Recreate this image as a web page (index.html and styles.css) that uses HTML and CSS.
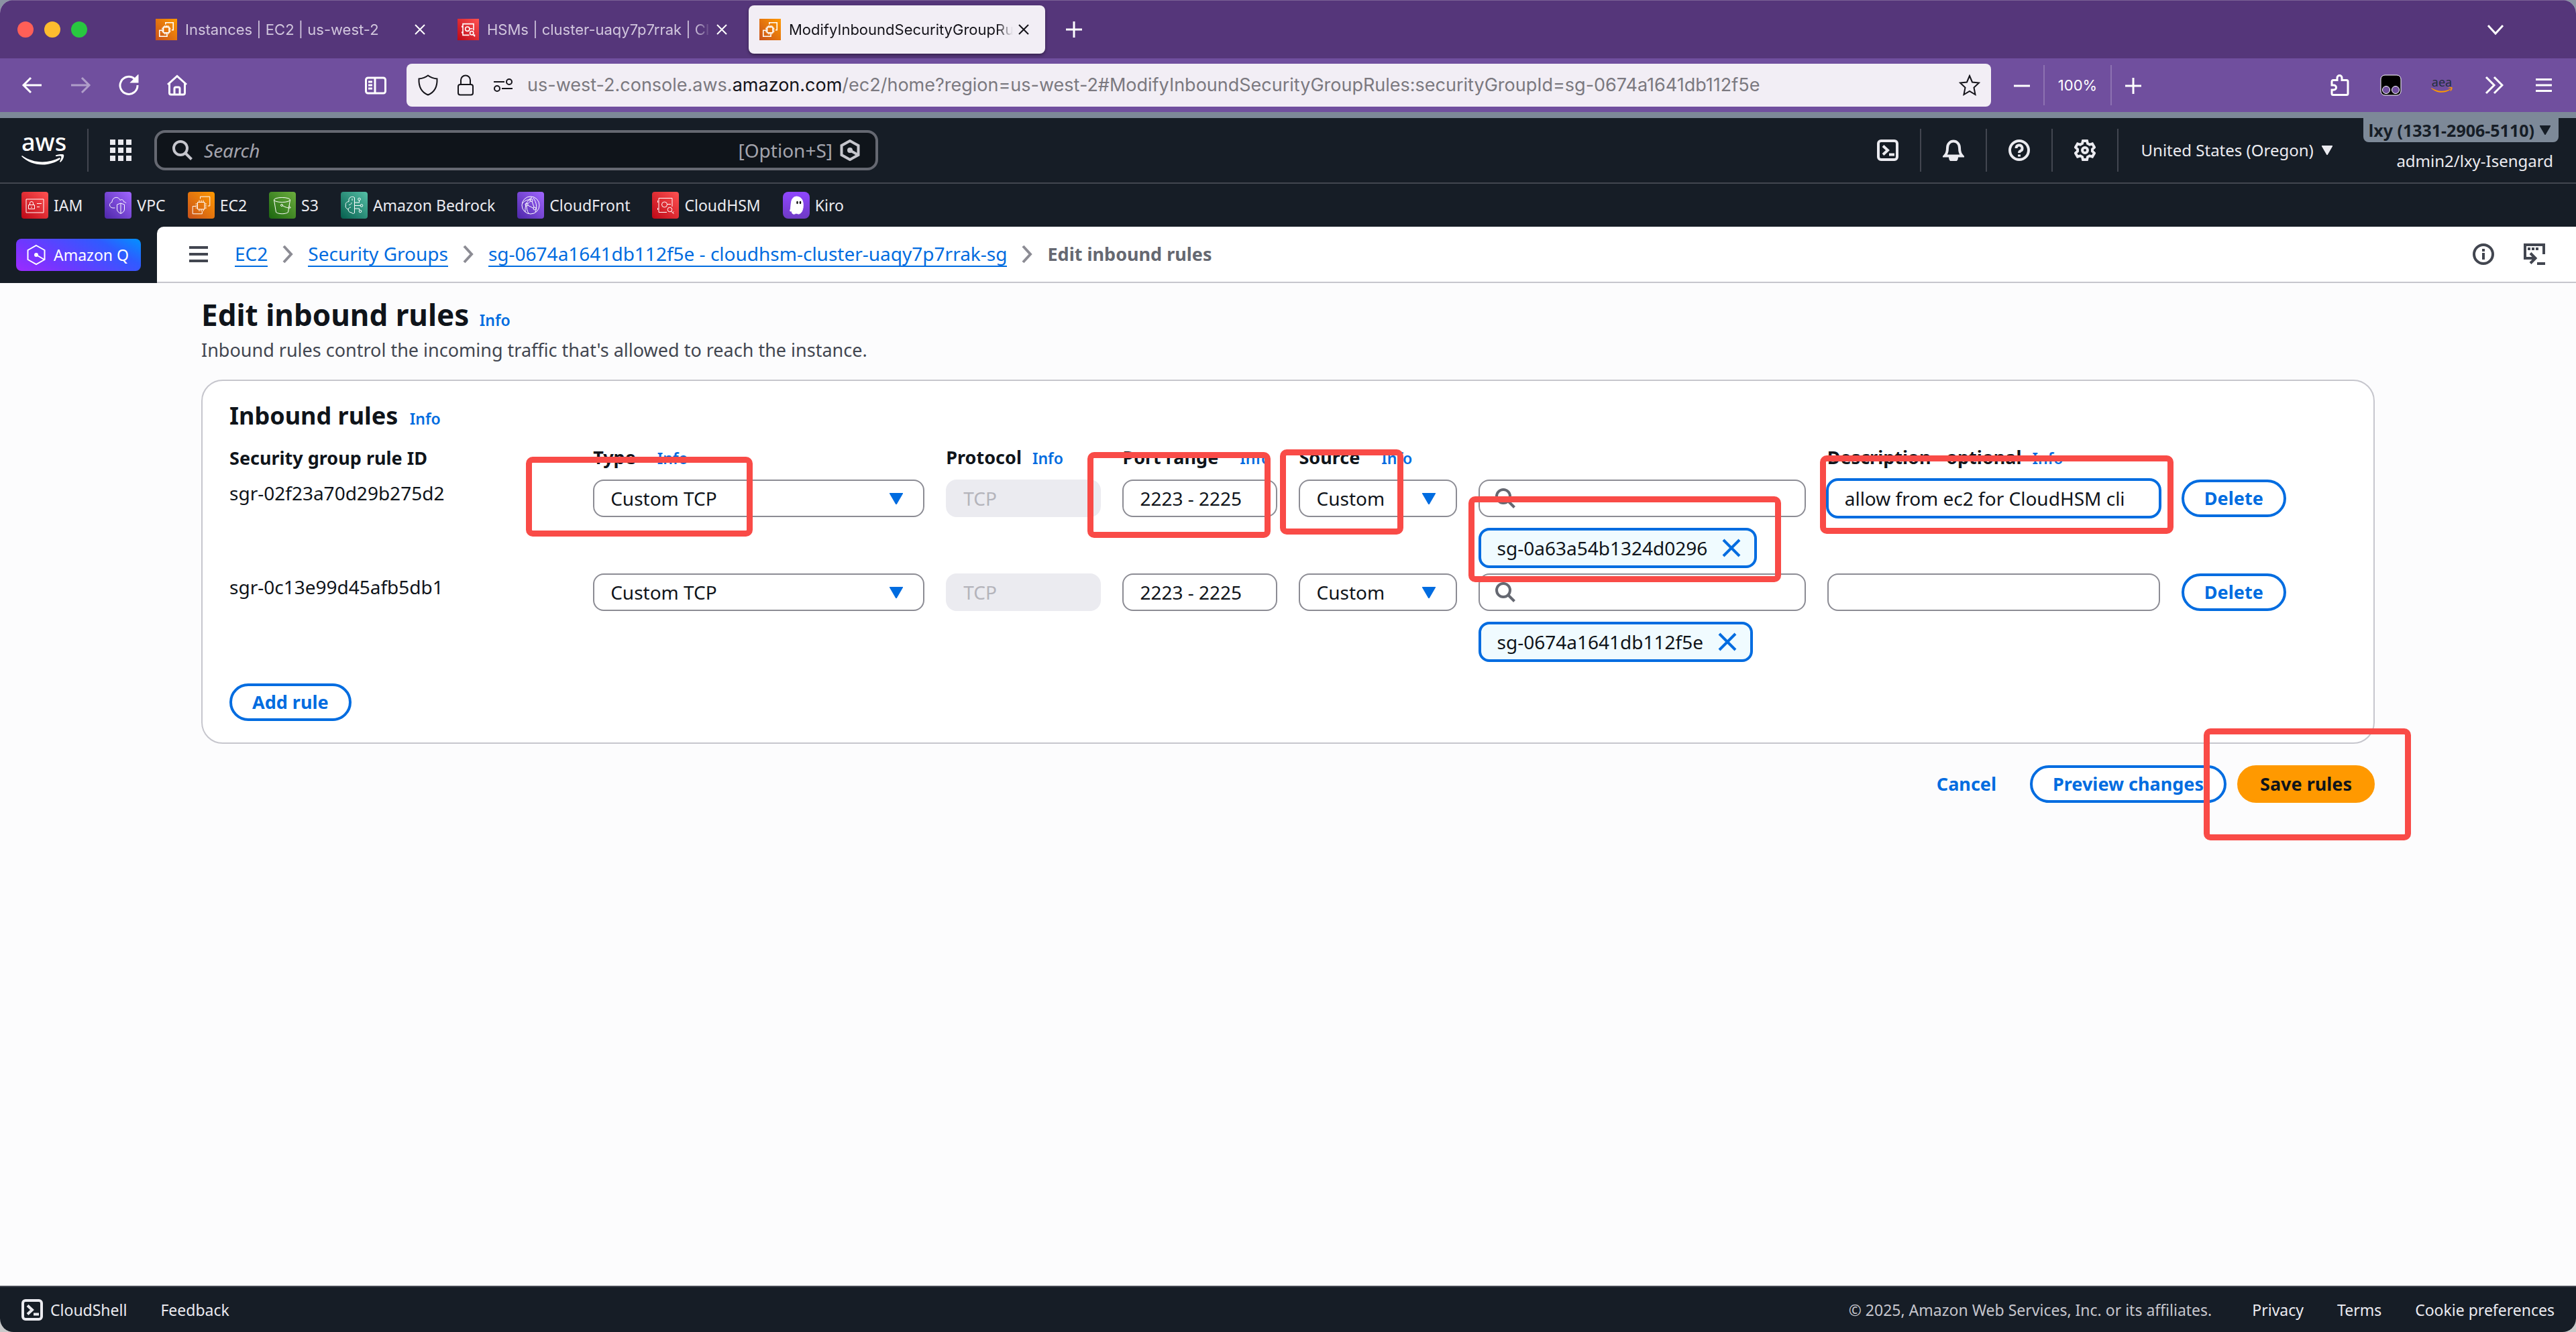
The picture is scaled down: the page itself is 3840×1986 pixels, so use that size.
FILE: index.html
```html
<!DOCTYPE html>
<html lang="en">
<head>
  <meta charset="UTF-8" />
  <title>ModifyInboundSecurityGroupRules | EC2 | us-west-2</title>
  <link rel="stylesheet" href="styles.css">
</head>
<body>

  <!-- shared icons -->
  <svg class="sprite" aria-hidden="true">
    <symbol id="i-ec2" viewBox="0 0 40 40"><path d="M14.5 15.5h10.5v10.5h-10.5zM17 15.5v-3M20 15.5v-3M23 15.5v-3M17 29v-3M20 29v-3M23 29v-3M14.500 18h-3M14.500 21h-3M14.500 24h-3M28 18h-3M28 21h-3M28 24h-3M18.500 10.500V7.200H32.800V21H29.800M13 21.500H7.200V32.800H21.300V29"/></symbol>
    <symbol id="i-hsm" viewBox="0 0 40 40"><path d="M30 20V9.500H10v21h12M8.500 13v3M8.500 24v3M30 20v2M23 18.500h5"/><circle cx="18.500" cy="19" r="4"/><circle cx="26.500" cy="26.500" r="3.300"/><path d="M28.500 29l4 4M31 31l1.500-1.500"/></symbol>
    <symbol id="i-x" viewBox="0 0 32 32"><path d="M9 9l14 14M23 9L9 23"/></symbol>
    <symbol id="i-remove" viewBox="0 0 32 32"><path d="M4 4l24 24M28 4L4 28"/></symbol>
    <symbol id="i-shell" viewBox="0 0 32 32"><rect x="2" y="2" width="28" height="28" rx="4"/><path d="M9 9.500l7 6.500-7 6.500M18 22.500h8"/></symbol>
    <symbol id="i-search" viewBox="0 0 32 32"><circle cx="13" cy="13" r="10"/><path d="M20 20l9.500 9.500"/></symbol>
    <symbol id="i-hex" viewBox="0 0 32 32"><path d="M16 2l12.500 7v14L16 30 3.500 23V9z"/><path d="M16 16l12 7"/><circle class="dot" cx="16" cy="16" r="2"/></symbol>
    <symbol id="i-down" viewBox="0 0 16 14"><path d="M1 1h14L8 13z"/></symbol>
    <symbol id="i-next" viewBox="0 0 16 28"><path d="M2 2l11 12L2 26"/></symbol>
    <symbol id="i-smile" viewBox="0 0 64 16"><path d="M1 2C18 14 40 14 57 5l1 2C42 19 16 19 0 3zM51 1.500C56 0 62-1 63 1c1 2-1 8-5 11l-1-1c2-4 3-7 2-8-1-1-5 0-8 0z"/></symbol>
  </svg>

  <div class="window">

    <!-- browser tabs -->
    <div class="tabbar">
      <div class="lights"><i class="red"></i><i class="yellow"></i><i class="green"></i></div>
      <div class="tabs">
        <div class="tab">
          <svg class="favicon orange"><use href="#i-ec2"/></svg>
          <span class="tab-title">Instances | EC2 | us-west-2</span>
          <button class="tab-close" aria-label="Close tab"><svg><use href="#i-x"/></svg></button>
        </div>
        <div class="tab">
          <svg class="favicon crimson"><use href="#i-hsm"/></svg>
          <span class="tab-title">HSMs | cluster-uaqy7p7rrak | Cl</span>
          <button class="tab-close" aria-label="Close tab"><svg><use href="#i-x"/></svg></button>
        </div>
        <div class="tab active">
          <svg class="favicon orange"><use href="#i-ec2"/></svg>
          <span class="tab-title">ModifyInboundSecurityGroupRu</span>
          <button class="tab-close" aria-label="Close tab"><svg><use href="#i-x"/></svg></button>
        </div>
      </div>
      <button class="tool" aria-label="New tab"><svg viewBox="0 0 32 32"><path d="M16 4v24M4 16h24"/></svg></button>
      <button class="tool list-tabs" aria-label="List all tabs"><svg viewBox="0 0 32 32"><path d="M5 10l11 12 11-12"/></svg></button>
    </div>

    <!-- browser toolbar -->
    <div class="toolbar">
      <div class="nav-tools">
        <button class="tool" aria-label="Back"><svg viewBox="0 0 32 32"><path d="M30 16H3M14 5L3 16l11 11"/></svg></button>
        <button class="tool faded" aria-label="Forward"><svg viewBox="0 0 32 32"><path d="M2 16h27M18 5l11 11-11 11"/></svg></button>
        <button class="tool" aria-label="Reload"><svg viewBox="0 0 32 32"><path d="M25 7A13 13 0 1 0 29 16"/><path class="solid" d="M29 3v8h-8z"/></svg></button>
        <button class="tool" aria-label="Home"><svg viewBox="0 0 32 32"><path d="M2 15L16 2.500 30 15M4.500 13v14.500a2.500 2.500 0 0 0 2.500 2.500h18a2.500 2.500 0 0 0 2.500-2.500V13M12 30V21a2 2 0 0 1 2-2h4a2 2 0 0 1 2 2v9"/></svg></button>
      </div>
      <button class="tool" aria-label="Sidebar"><svg viewBox="0 0 32 32"><rect x="1.500" y="5" width="29" height="23" rx="3"/><path d="M15 5v23M5 11h6M5 16h6M5 21h6"/></svg></button>
      <div class="urlbar">
        <svg viewBox="0 0 32 32"><path d="M16 1.500C12 4.500 7 6 2.500 6.500 2 17 5 26 16 30.500 27 26 30 17 29.500 6.500 25 6 20 4.500 16 1.500z"/></svg>
        <svg viewBox="0 0 32 32"><rect x="5" y="15" width="22" height="15.500" rx="3"/><path d="M9 15V8.500a7 7 0 0 1 14 0V15"/></svg>
        <svg viewBox="0 0 32 32"><path d="M2 11h16M14 21h16"/><circle cx="25" cy="11" r="4"/><circle cx="7" cy="21" r="4"/></svg>
        <div class="url" role="textbox" aria-label="Address" contenteditable="true" spellcheck="false">us-west-2.console.aws.<b>amazon.com</b>/ec2/home?region=us-west-2#ModifyInboundSecurityGroupRules:securityGroupId=sg-0674a1641db112f5e</div>
        <svg viewBox="0 0 32 32"><path d="M16 2l4 9.500 10 1-7.500 7 2 10.500L16 25l-8.500 5 2-10.500L2 12.500l10-1z"/></svg>
      </div>
      <div class="zoom">
        <button class="tool" aria-label="Zoom out"><svg viewBox="0 0 32 32"><path d="M4 17h24"/></svg></button>
        <button class="zoom-level">100%</button>
        <button class="tool" aria-label="Zoom in"><svg viewBox="0 0 32 32"><path d="M16 5v24M4 17h24"/></svg></button>
      </div>
      <div class="ext-tools">
        <button class="tool" aria-label="Extensions"><svg viewBox="0 0 32 32"><path d="M4 10.500a2 2 0 0 1 2-2h6V5a3.500 3.500 0 0 1 7 0v3.500h7a2 2 0 0 1 2 2v18a2 2 0 0 1-2 2H6a2 2 0 0 1-2-2V23h3a3.500 3.500 0 0 0 0-7H4z"/></svg></button>
        <button class="tool" aria-label="Tampermonkey"><svg viewBox="0 0 32 32"><rect class="black" x="1" y="1" width="30" height="30" rx="6"/><circle class="eye" cx="9" cy="23" r="5.500"/><circle class="eye" cx="23" cy="23" r="5.500"/></svg></button>
        <button class="aea" aria-label="AEA"><span>aea</span><svg><use href="#i-smile"/></svg></button>
        <button class="tool" aria-label="More tools"><svg viewBox="0 0 32 32"><path d="M6 4l12 12L6 28M18 4l12 12-12 12"/></svg></button>
        <button class="tool" aria-label="Menu"><svg viewBox="0 0 32 32"><path d="M4 7.500h24M4 16h24M4 24.500h24"/></svg></button>
      </div>
    </div>

    <!-- aws header -->
    <header class="aws-header">
      <a class="aws-logo" href="#"><span>aws</span><svg><use href="#i-smile"/></svg></a>
      <button class="services" aria-label="Services">
        <svg viewBox="0 0 32 32"><path d="M0 4h8M12 4h8M24 4h8M0 16h8M12 16h8M24 16h8M0 28h8M12 28h8M24 28h8"/></svg>
      </button>
      <label class="search">
        <svg><use href="#i-search"/></svg>
        <input type="search" placeholder="Search" aria-label="Search">
        <span>[Option+S]</span>
        <svg><use href="#i-hex"/></svg>
      </label>
      <nav class="header-tools">
        <button aria-label="CloudShell"><svg><use href="#i-shell"/></svg></button>
        <button aria-label="Notifications"><svg viewBox="0 0 32 32"><path d="M3 24.500c3-3 4-6 4-12 0-6 4-10 9-10s9 4 9 10c0 6 1 9 4 12z"/><path class="solid" d="M11 27h10a5 5 0 0 1-10 0z"/></svg></button>
        <button aria-label="Help"><svg viewBox="0 0 32 32"><circle cx="16" cy="16" r="14"/><path d="M11.500 13a4.500 4.500 0 1 1 6.500 4c-1.500.7-2 1.500-2 3M16 22.500v3"/></svg></button>
        <button aria-label="Settings"><svg viewBox="0 0 32 32"><path d="M13 2h6l1 4 3 1.700 4-1.300 3 5.200-3 2.900v3l3 2.900-3 5.200-4-1.300L20 26l-1 4h-6l-1-4-3-1.700-4 1.300-3-5.200 3-2.900v-3l-3-2.900 3-5.200 4 1.300L12 6z"/><circle cx="16" cy="16" r="4"/></svg></button>
      </nav>
      <button class="region">United States (Oregon) <svg><use href="#i-down"/></svg></button>
      <div class="account">
        <button class="account-tab">lxy (1331-2906-5110) <svg><use href="#i-down"/></svg></button>
        <span>admin2/lxy-Isengard</span>
      </div>
    </header>

    <!-- favourites -->
    <nav class="favorites">
      <a href="#"><svg class="crimson" viewBox="0 0 40 40"><path d="M7 11h26v20H7zM10.500 19.500h9v6h-9zM12.500 19.500v-2.500a2.500 2.500 0 0 1 5 0v2.500M15 22v2M23 17.500h7M23 22.500h4"/></svg>IAM</a>
      <a href="#"><svg class="purple" viewBox="0 0 40 40"><path d="M15.500 24H12C6.500 23.500 6 16.500 11 15.500 11 8 20 5.500 23 12.500c3-2 5.500 0 5.500 2.500 2 0 3 1 3.500 2M24 17l5.500 2v7c0 3-2.500 5-5.500 6.500-3-1.500-5.500-3.500-5.500-6.500v-7zM24 17v15"/></svg>VPC</a>
      <a href="#"><svg class="orange"><use href="#i-ec2"/></svg>EC2</a>
      <a href="#"><svg class="green" viewBox="0 0 40 40"><ellipse cx="19.500" cy="12" rx="12" ry="3.500"/><path d="M7.500 12l3 18.500c4 3 14 3 18 0L31.500 12M20 20.500c4 2.500 9 4 12 3.500 1-1-1-2-3-3"/><circle cx="19" cy="20" r="1.500"/></svg>S3</a>
      <a href="#"><svg class="teal" viewBox="0 0 40 40"><path d="M20.500 8.500C17 6 12.500 8 12 11.500v3C8 15 6.500 18 7.500 20c-1 3 .5 5 3.500 6 0 3 2 5 5 5 1.500 2 3.500 1.500 4.500.5zM12 19.500c2 0 4-1 4-3.500M17 10v3M11 26c1-2 2-3 4-3M20.500 16h7v-3M20.500 20.500h9M20.500 25h7v2"/><circle cx="27.500" cy="11" r="1.800"/><circle cx="31" cy="20.500" r="1.800"/><circle cx="29" cy="29" r="1.800"/></svg>Amazon Bedrock</a>
      <a href="#"><svg class="purple" viewBox="0 0 40 40"><circle cx="20" cy="20" r="13"/><path d="M12 30c-1-9 3-18 10-22M27 30c3-6 2-14-3-21M8 17c3-4 8-6 13-5M15 18.500l5-5M15.500 20l9 4.500M22 14l3 9M14 21c0 4 1 8 3 11"/><circle cx="21" cy="12.500" r="2"/><circle cx="14" cy="19" r="2"/><circle cx="26" cy="25" r="2"/></svg>CloudFront</a>
      <a href="#"><svg class="crimson"><use href="#i-hsm"/></svg>CloudHSM</a>
      <a href="#"><svg class="kiro" viewBox="0 0 40 40"><path d="M11 27c2-5-1-19 9-20 10 0 11 10 10 17-1 5-3 9-7 9-1 0-2-1-3-1-2 1-4 2-6 0-1-1 0-3-1-3-2 0-3 0-2-2z"/><ellipse class="pupil" cx="21.500" cy="16" rx="1.300" ry="2.300"/><ellipse class="pupil" cx="26" cy="16" rx="1.300" ry="2.300"/></svg>Kiro</a>
    </nav>

    <!-- breadcrumbs -->
    <div class="crumb-row">
      <button class="amazon-q"><svg><use href="#i-hex"/></svg>Amazon Q</button>
      <div class="crumbs">
        <button class="menu" aria-label="Open navigation"><svg viewBox="0 0 32 32"><path d="M2 6h28M2 16h28M2 26h28"/></svg></button>
        <a href="#">EC2</a>
        <svg class="sep"><use href="#i-next"/></svg>
        <a href="#">Security Groups</a>
        <svg class="sep"><use href="#i-next"/></svg>
        <a href="#">sg-0674a1641db112f5e - cloudhsm-cluster-uaqy7p7rrak-sg</a>
        <svg class="sep"><use href="#i-next"/></svg>
        <strong>Edit inbound rules</strong>
        <div class="crumb-tools">
          <button aria-label="Info"><svg viewBox="0 0 32 32"><circle cx="16" cy="16" r="14"/><path d="M16 14v10M16 8v4"/></svg></button>
          <button aria-label="Tutorials"><svg viewBox="0 0 32 32"><path d="M30 16V2H2v20h15M10 14.500l7.500 7.500-7.500 7.500M20 30h12M6 8h4M12 8h4M18 8h4"/></svg></button>
        </div>
      </div>
    </div>

    <main>
      <h1>Edit inbound rules <a class="info" href="#">Info</a></h1>
      <p class="lead">Inbound rules control the incoming traffic that's allowed to reach the instance.</p>

      <section class="card">
        <h2>Inbound rules <a class="info" href="#">Info</a></h2>
        <table class="rules">
          <colgroup>
            <col class="c-id"><col class="c-type"><col class="c-port"><col class="c-port">
            <col class="c-source"><col class="c-search"><col class="c-desc"><col class="c-action">
          </colgroup>
          <thead>
            <tr>
              <th>Security group rule ID</th>
              <th><span class="wide">Type</span><a class="info" href="#">Info</a></th>
              <th><span>Protocol</span><a class="info" href="#">Info</a></th>
              <th><span class="wide">Port range</span><a class="info" href="#">Info</a></th>
              <th><span class="wide">Source</span><a class="info" href="#">Info</a></th>
              <th></th>
              <th><span>Description - optional</span><a class="info" href="#">Info</a></th>
              <th></th>
            </tr>
          </thead>
          <tbody>
            <tr>
              <td>sgr-02f23a70d29b275d2</td>
              <td><div class="field"><select aria-label="Type"><option>Custom TCP</option></select><svg><use href="#i-down"/></svg><i class="mark mark-type"></i></div></td>
              <td><div class="field"><input type="text" aria-label="Protocol" value="TCP" disabled></div></td>
              <td><div class="field"><input type="text" aria-label="Port range" value="2223 - 2225"><i class="mark mark-port"></i></div></td>
              <td><div class="field"><select aria-label="Source"><option>Custom</option></select><svg><use href="#i-down"/></svg><i class="mark mark-source"></i></div></td>
              <td>
                <div class="field"><input type="search" aria-label="Source search"><svg class="lens"><use href="#i-search"/></svg></div>
                <div class="token">sg-0a63a54b1324d0296<button aria-label="Remove"><svg><use href="#i-remove"/></svg></button><i class="mark mark-token"></i></div>
              </td>
              <td><div class="field"><input class="focused" type="text" aria-label="Description" value="allow from ec2 for CloudHSM cli"><i class="mark mark-desc"></i></div></td>
              <td><button class="btn">Delete</button></td>
            </tr>
            <tr>
              <td>sgr-0c13e99d45afb5db1</td>
              <td><div class="field"><select aria-label="Type"><option>Custom TCP</option></select><svg><use href="#i-down"/></svg></div></td>
              <td><div class="field"><input type="text" aria-label="Protocol" value="TCP" disabled></div></td>
              <td><div class="field"><input type="text" aria-label="Port range" value="2223 - 2225"></div></td>
              <td><div class="field"><select aria-label="Source"><option>Custom</option></select><svg><use href="#i-down"/></svg></div></td>
              <td>
                <div class="field"><input type="search" aria-label="Source search"><svg class="lens"><use href="#i-search"/></svg></div>
                <div class="token">sg-0674a1641db112f5e<button aria-label="Remove"><svg><use href="#i-remove"/></svg></button></div>
              </td>
              <td><div class="field"><input type="text" aria-label="Description"></div></td>
              <td><button class="btn">Delete</button></td>
            </tr>
          </tbody>
        </table>
        <button class="btn">Add rule</button>
      </section>

      <div class="actions">
        <button class="btn link">Cancel</button>
        <button class="btn">Preview changes</button>
        <div class="save"><button class="btn primary">Save rules</button><i class="mark mark-save"></i></div>
      </div>
    </main>

    <footer>
      <button class="cloudshell"><svg><use href="#i-shell"/></svg>CloudShell</button>
      <a href="#">Feedback</a>
      <span class="copyright">© 2025, Amazon Web Services, Inc. or its affiliates.</span>
      <a href="#">Privacy</a>
      <a href="#">Terms</a>
      <a href="#">Cookie preferences</a>
    </footer>
  </div>

</body>
</html>
```
FILE: styles.css
```css
* {
  box-sizing: border-box;
}

body {
  margin: 0;
  background: linear-gradient(#8b93a3, #c9c9c9);
  font-family: "Noto Sans", sans-serif;
  font-size: 28px;
  line-height: 40px;
  color: #0f141a;
}

button {
  font: inherit;
  color: inherit;
  background: none;
  border: none;
  padding: 0;
  cursor: pointer;
}

a {
  color: inherit;
  text-decoration: none;
}

svg {
  display: block;
  flex: none;
  width: 32px;
  height: 32px;
  fill: none;
  stroke: currentColor;
  stroke-width: 2;
}

.sprite {
  position: absolute;
  width: 0;
  height: 0;
}

.solid,
.dot {
  fill: currentColor;
}

.window {
  display: flex;
  flex-direction: column;
  min-height: 100vh;
  border-radius: 20px;
  overflow: hidden;
  background: #fcfcfd;
}

/* service icon colours */
.crimson { background: linear-gradient(45deg, #bd0816, #ff5252); }
.purple { background: linear-gradient(45deg, #4d27a8, #a166ff); }
.orange { background: linear-gradient(45deg, #c8511b, #ff9900); }
.green { background: linear-gradient(45deg, #1b660f, #6cae3e); }
.teal { background: linear-gradient(45deg, #055f4e, #56c0a7); }
.kiro { background: linear-gradient(#9046ff, #6e3ac4); }

.kiro path {
  fill: #fff;
}

.kiro .pupil {
  fill: #111;
  stroke: none;
}

/* browser chrome */
.tabbar,
.toolbar {
  display: flex;
  align-items: center;
  font-family: Inter, sans-serif;
  color: #fff;
}

.tabbar {
  height: 87px;
  padding: 0 104px 0 26px;
  background: #55367a;
  border-top: 1px solid #7b6296;
}

.lights {
  display: flex;
  gap: 16px;
  width: 190px;
}

.lights i {
  width: 24px;
  height: 24px;
  border-radius: 50%;
}

.lights .red { background: #ff5f57; }
.lights .yellow { background: #febc2e; }
.lights .green { background: #28c840; }

.tabs {
  display: flex;
  gap: 8px;
  margin-right: 27px;
}

.tab {
  display: flex;
  align-items: center;
  width: 442px;
  height: 72px;
  padding: 0 16px;
  border-radius: 8px;
  font-size: 22px;
  color: #d1c6dd;
}

.tab.active {
  background: #f2eef5;
  color: #15141a;
  box-shadow: 0 2px 4px rgba(0, 0, 0, 0.4);
}

.favicon {
  margin-right: 12px;
  color: #fff;
}

.tab-title {
  flex: 1;
  overflow: hidden;
  white-space: nowrap;
  -webkit-mask-image: linear-gradient(to left, transparent, #000 24px);
  mask-image: linear-gradient(to left, transparent, #000 24px);
}

.tab-close {
  color: #fff;
}

.tab.active .tab-close {
  color: #15141a;
}

.tool svg {
  stroke-width: 3;
}

.list-tabs {
  margin-left: auto;
}

.toolbar {
  height: 80px;
  padding: 0 32px;
  background: #704f9e;
}

.nav-tools {
  display: flex;
  gap: 40px;
  margin-right: 264px;
}

.faded {
  opacity: 0.45;
}

.urlbar {
  display: flex;
  align-items: center;
  flex: 1;
  height: 64px;
  margin-left: 30px;
  padding: 0 16px;
  gap: 24px;
  border-radius: 8px;
  background: #f2eef5;
  color: #15141a;
}

.url {
  flex: 1;
  margin-left: -4px;
  overflow: hidden;
  white-space: nowrap;
  font-size: 27px;
  color: #7b7980;
}

.url b {
  font-weight: 400;
  color: #15141a;
}

.zoom {
  display: flex;
  align-items: center;
  margin-left: 30px;
}

.zoom-level {
  width: 102px;
  height: 60px;
  margin: 0 16px;
  border: solid #8d72b1;
  border-width: 0 2px;
  font-size: 22px;
}

.ext-tools {
  display: flex;
  align-items: center;
  gap: 44px;
  margin-left: 276px;
}

.black {
  fill: #000;
  stroke-width: 1;
}

.eye {
  fill: #704f9e;
  stroke-width: 1;
}

.aea span {
  display: block;
  height: 14px;
  font: 18px/12px "Noto Sans", sans-serif;
  color: #232f3e;
}

.aea svg,
.aws-logo svg {
  fill: currentColor;
  stroke: none;
}

.aea svg {
  height: 8px;
  color: #ff9900;
}

/* aws header */
.aws-header {
  display: flex;
  align-items: center;
  height: 107px;
  padding: 0 26px 0 32px;
  border-top: 9px solid #7d8998;
  border-bottom: 2px solid #424650;
  background: #161d26;
  color: #ebebf0;
  font-size: 24px;
}

.aws-logo {
  width: 98px;
  padding-right: 32px;
  color: #fff;
}

.aws-logo span {
  display: block;
  height: 28px;
  text-align: center;
  font-size: 36px;
  font-weight: 500;
  line-height: 20px;
}

.aws-logo svg {
  width: 64px;
  height: 16px;
}

.services {
  padding: 16px 34px 16px 32px;
  border-left: 2px solid #424650;
}

.services svg {
  stroke-width: 8;
}

.search {
  display: flex;
  align-items: center;
  width: 1079px;
  height: 60px;
  padding: 0 22px;
  border: 4px solid #656871;
  border-radius: 16px;
  background: #0f141a;
  color: #c6c6cd;
  font-size: 28px;
}

.search svg {
  stroke-width: 4;
}

.search input {
  flex: 1;
  margin: 0 16px;
  padding: 0;
  border: none;
  outline: none;
  background: none;
  font: inherit;
  color: inherit;
}

.search input::placeholder {
  font-style: italic;
  color: #a4a4ad;
}

.search span {
  margin-right: 10px;
  color: #a4a4ad;
}

.header-tools {
  display: flex;
  margin-left: auto;
}

.header-tools button {
  padding: 16px 32px;
  border-right: 2px solid #424650;
}

.header-tools svg {
  stroke-width: 4;
}

.region {
  display: flex;
  align-items: center;
  gap: 12px;
  margin: 0 46px 0 34px;
}

.region svg,
.account svg {
  width: 16px;
  height: 14px;
  fill: currentColor;
}

.account {
  display: flex;
  flex-direction: column;
  align-items: flex-end;
  align-self: flex-start;
}

.account-tab {
  display: flex;
  align-items: center;
  gap: 8px;
  height: 36px;
  padding: 0 12px 0 8px;
  border-radius: 0 0 8px 8px;
  background: #7d8998;
  color: #161d26;
  font-size: 25px;
  font-weight: 700;
}

.account span {
  margin: 8px 8px 0 0;
}

.favorites {
  display: flex;
  align-items: center;
  gap: 33px;
  height: 64px;
  padding: 0 32px;
  background: #161d26;
  color: #ebebf0;
  font-size: 23px;
}

.favorites a {
  display: flex;
  align-items: center;
  gap: 8px;
}

.favorites svg {
  width: 40px;
  height: 40px;
  border-radius: 4px;
  color: #fff;
  stroke-width: 1;
}

.favorites .kiro {
  border-radius: 8px;
}

/* breadcrumbs */
.crumb-row {
  display: flex;
  background: #161d26;
}

.amazon-q {
  display: flex;
  align-items: center;
  gap: 10px;
  width: 186px;
  height: 48px;
  margin: 18px 24px;
  padding: 0 14px;
  border-radius: 8px;
  background: linear-gradient(30deg, #9d2bff, #7037ff 30%, #2f5bff 75%, #0093ff);
  color: #fff;
  font-size: 23px;
  white-space: nowrap;
}

.crumbs {
  display: flex;
  align-items: center;
  flex: 1;
  height: 84px;
  padding: 0 46px;
  border-bottom: 2px solid #c6c6cd;
  border-top-left-radius: 10px;
  background: #fff;
}

.crumbs a {
  color: #006ce0;
  border-bottom: 2px solid #006ce0;
  line-height: 36px;
}

.menu {
  margin-right: 38px;
  color: #424650;
}

.menu svg,
.crumb-tools svg {
  stroke-width: 4;
}

.crumbs .sep {
  width: 16px;
  height: 28px;
  margin: 0 22px;
  color: #8c8c94;
  stroke-width: 4;
}

.crumbs strong {
  font-size: 27px;
  color: #656871;
}

.crumb-tools {
  display: flex;
  gap: 44px;
  margin-left: auto;
  color: #424650;
}

/* page */
main {
  flex: 1;
  padding: 18px 300px;
}

h1,
h2,
.lead {
  margin: 0;
}

h1 {
  font-size: 44px;
  line-height: 58px;
}

h2 {
  margin-bottom: 14px;
  font-size: 36px;
  line-height: 48px;
}

.info {
  font-size: 23px;
  font-weight: 600;
  color: #006ce0;
}

h1 .info {
  margin-left: 4px;
}

h2 .info {
  margin-left: 8px;
}

.lead {
  margin-bottom: 28px;
  font-size: 27px;
  line-height: 32px;
  color: #424650;
}

.card {
  padding: 28px 40px 32px;
  border: 2px solid #c6c6cd;
  border-radius: 32px;
  background: #fff;
}

.rules {
  width: 100%;
  margin-bottom: 24px;
  table-layout: fixed;
  border-collapse: collapse;
}

.c-id { width: 542px; }
.c-type { width: 526px; }
.c-port { width: 263px; }
.c-source { width: 267px; }
.c-search { width: 520px; }
.c-desc { width: 528px; }
.c-action { width: 246px; }

.rules th {
  padding: 0 0 12px;
  text-align: left;
  font-size: 27px;
  white-space: nowrap;
}

.rules th span {
  margin-right: 16px;
}

.rules th .wide {
  margin-right: 32px;
}

.rules td {
  height: 140px;
  padding: 0 32px 0 0;
  vertical-align: top;
}

.field {
  position: relative;
  display: flex;
  align-items: center;
}

.field input,
.field select {
  width: 100%;
  height: 56px;
  padding: 0 24px;
  border: 2px solid #8c8c94;
  border-radius: 16px;
  outline: none;
  appearance: none;
  background: #fff;
  font: inherit;
  color: #0f141a;
}

.field input:disabled {
  border-color: #ebebf0;
  background: #ebebf0;
  color: #b4b4bb;
}

.field .focused {
  border-color: #006ce0;
  box-shadow: 0 0 0 2px #006ce0;
}

.field svg {
  position: absolute;
  right: 32px;
  width: 20px;
  height: 17px;
  fill: currentColor;
  color: #006ce0;
  pointer-events: none;
}

.field .lens {
  left: 24px;
  width: 32px;
  height: 32px;
  fill: none;
  stroke-width: 4;
  color: #656871;
}

.token {
  position: relative;
  display: inline-flex;
  align-items: center;
  gap: 20px;
  height: 60px;
  margin-top: 16px;
  padding: 0 18px 0 24px;
  border: 4px solid #006ce0;
  border-radius: 16px;
  background: #f0fbff;
}

.token button {
  color: #006ce0;
}

.token svg {
  stroke-width: 4;
}

.btn {
  height: 56px;
  padding: 0 30px;
  border: 4px solid #006ce0;
  border-radius: 28px;
  background: #fff;
  color: #006ce0;
  font-size: 27px;
  font-weight: 700;
  line-height: 48px;
  white-space: nowrap;
}

.btn.link {
  border-color: transparent;
  background: none;
}

.btn.primary {
  border-color: #ff9900;
  background: #ff9900;
  color: #0f141a;
}

.actions {
  display: flex;
  justify-content: flex-end;
  gap: 16px;
  margin-top: 32px;
}

.save {
  position: relative;
}

/* red highlight boxes drawn over the form */
.mark {
  position: absolute;
  z-index: 1;
  border: 9px solid #f94b47;
  border-radius: 10px;
  pointer-events: none;
}

.mark-type { left: -100px; top: -34px; width: 338px; height: 119px; }
.mark-port { left: -52px; top: -41px; width: 273px; height: 128px; }
.mark-source { left: -28px; top: -45px; width: 184px; height: 127px; }
.mark-token { left: -19px; top: -51px; width: 466px; height: 128px; }
.mark-desc { left: -11px; top: -36px; width: 527px; height: 117px; }
.mark-save { left: -50px; top: -55px; width: 309px; height: 167px; }

footer {
  display: flex;
  align-items: center;
  gap: 50px;
  height: 69px;
  padding: 0 32px;
  border-top: 2px solid #424650;
  background: #161d26;
  color: #ebebf0;
  font-size: 23px;
}

.cloudshell {
  display: flex;
  align-items: center;
  gap: 11px;
}

.cloudshell svg {
  stroke-width: 4;
}

.copyright {
  margin-left: auto;
  margin-right: 10px;
  color: #c6c6cd;
}
```
